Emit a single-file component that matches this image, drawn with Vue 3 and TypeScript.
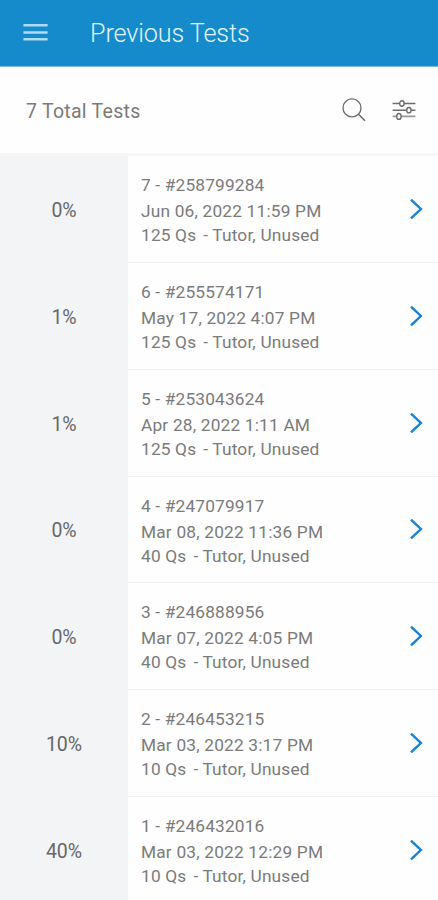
<script setup lang="ts">
interface TestRecord {
  index: number
  id: string
  date: string
  questions: number
  score: number
}

const tests: TestRecord[] = [
  { index: 7, id: '258799284', date: 'Jun 06, 2022 11:59 PM', questions: 125, score: 0 },
  { index: 6, id: '255574171', date: 'May 17, 2022 4:07 PM', questions: 125, score: 1 },
  { index: 5, id: '253043624', date: 'Apr 28, 2022 1:11 AM', questions: 125, score: 1 },
  { index: 4, id: '247079917', date: 'Mar 08, 2022 11:36 PM', questions: 40, score: 0 },
  { index: 3, id: '246888956', date: 'Mar 07, 2022 4:05 PM', questions: 40, score: 0 },
  { index: 2, id: '246453215', date: 'Mar 03, 2022 3:17 PM', questions: 10, score: 10 },
  { index: 1, id: '246432016', date: 'Mar 03, 2022 12:29 PM', questions: 10, score: 40 },
]
</script>

<template>
  <div class="screen">
    <header class="app-bar">
      <button class="icon-button" aria-label="Menu">
        <svg width="26" height="20" viewBox="0 0 26 20">
          <path d="M1.4 2.2H25.6M1.4 9.4H25.6M1.4 16.2H25.6" stroke="#b0daf4" stroke-width="2.5" fill="none" />
        </svg>
      </button>
      <h1 class="title">Previous Tests</h1>
    </header>

    <section class="summary">
      <span class="count">{{ tests.length }} Total Tests</span>
      <button class="icon-button" aria-label="Search">
        <svg width="26" height="26" viewBox="0 0 26 26" fill="none" stroke="#6c6c6c">
          <circle cx="10" cy="10.9" r="9" stroke-width="1.3" />
          <path d="M16.4 17.3L23 23.8" stroke-width="1.6" />
        </svg>
      </button>
      <button class="icon-button filter" aria-label="Filter">
        <svg width="24" height="22" viewBox="0 0 24 22" fill="none" stroke="#6c6c6c" stroke-width="1.4">
          <path d="M0.6 4.5H7.6M12.2 4.5H23.4M0.6 11.2H14.6M19.2 11.2H23.4" />
          <path d="M0.6 17.4H4.6M9.2 17.4H23.4" stroke="#989898" stroke-width="1.8" />
          <ellipse cx="9.9" cy="4.5" rx="2.2" ry="2.7" />
          <ellipse cx="16.9" cy="11.2" rx="2.2" ry="2.7" />
          <ellipse cx="6.9" cy="17.4" rx="2.2" ry="2.9" />
        </svg>
      </button>
    </section>

    <ul class="list">
      <li v-for="test in tests" :key="test.id" class="row">
        <div class="score">{{ test.score }}%</div>
        <div class="details">
          <div class="line">{{ test.index }} - #{{ test.id }}</div>
          <div class="line date">{{ test.date }}</div>
          <div class="line mode"><span>{{ test.questions }} Qs</span><span>- Tutor, Unused</span></div>
        </div>
        <svg class="chevron" width="16" height="24" viewBox="0 0 16 24">
          <path d="M2 2.6L11.9 12L2 21.4" fill="none" stroke="#1482da" stroke-width="2.4" />
        </svg>
      </li>
    </ul>
  </div>
</template>

<style>
body {
  margin: 0;
  background: #fefefe;
}
</style>

<style scoped>
.screen {
  width: 438px;
  height: 900px;
  overflow: hidden;
  display: flex;
  flex-direction: column;
  background: #fefefe;
  font-family: Roboto, "Liberation Sans", sans-serif;
  color: #7b7b7b;
}

.app-bar {
  flex: none;
  box-sizing: border-box;
  height: 67px;
  display: flex;
  align-items: center;
  gap: 42px;
  padding: 0 22px;
  background: #158bcc;
  border-bottom: 1px solid #79bce2;
}

.icon-button {
  display: flex;
  padding: 0;
  border: 0;
  background: none;
}

.title {
  margin: 0;
  padding-top: 1px;
  font-size: 25.2px;
  font-weight: 300;
  line-height: 30px;
  letter-spacing: -0.12px;
  color: #e2f3fc;
}

.summary {
  flex: none;
  box-sizing: border-box;
  height: 89px;
  display: flex;
  align-items: center;
  padding: 0 22px 0 26px;
  border-bottom: 3px solid #f6f7f8;
}

.count {
  flex: 1;
  padding-top: 3px;
  font-size: 19.5px;
  letter-spacing: 0.27px;
}

.filter {
  margin-left: 24px;
}

.list {
  flex: none;
  margin: 0;
  padding: 0;
  list-style: none;
}

.row {
  box-sizing: border-box;
  height: 106.85px;
  display: flex;
  align-items: stretch;
  border-bottom: 1px solid #f1f2f3;
}

.score {
  box-sizing: border-box;
  width: 128px;
  display: flex;
  align-items: center;
  justify-content: center;
  padding-top: 3px;
  background: #f3f4f6;
  font-size: 19.5px;
  color: #66676b;
}

.details {
  flex: 1;
  padding: 17px 0 0 13px;
}

.line {
  height: 25px;
  font-size: 17.3px;
  line-height: 25px;
  letter-spacing: 0.17px;
  white-space: nowrap;
}

.date {
  height: 24px;
  padding-top: 1px;
  letter-spacing: 0.19px;
}

.mode {
  display: flex;
  gap: 7px;
}

.chevron {
  align-self: center;
  margin-right: 13px;
}
</style>
